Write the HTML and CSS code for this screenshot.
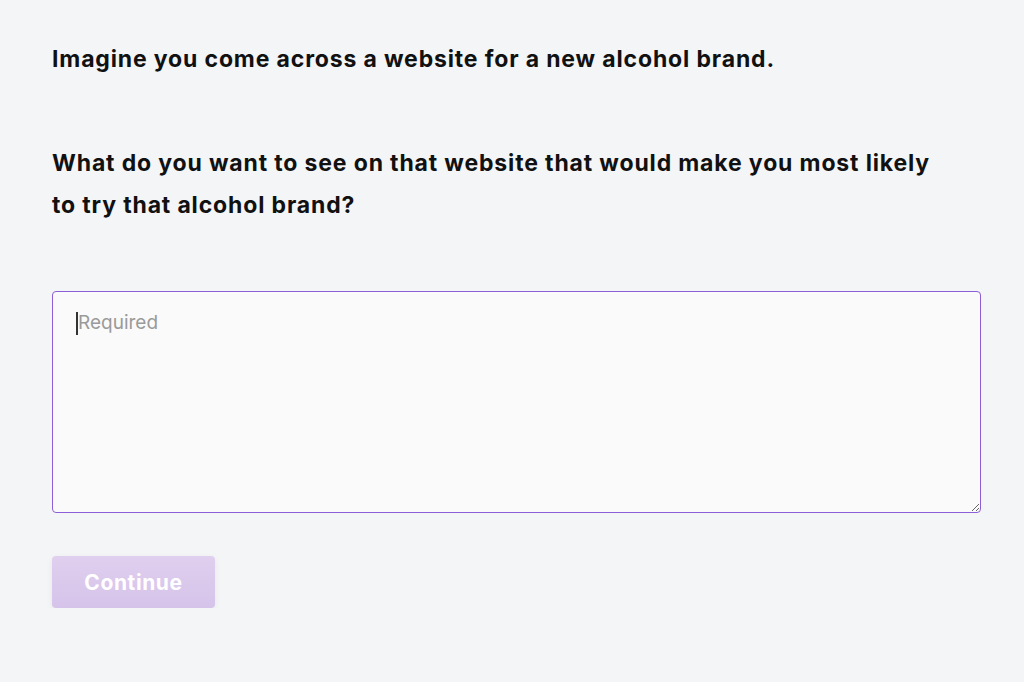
FILE: index.html
```html
<!DOCTYPE html>
<html lang="en">
<head>
<meta charset="utf-8">
<title>Question</title>
<link rel="stylesheet" href="styles.css">
</head>
<body>
<main class="page">
  <p class="question">Imagine you come across a website for a new alcohol brand.</p>
  <p class="question second">What do you want to see on that website that would make you most likely to try that alcohol brand?</p>
  <div class="field">
    <textarea class="answer" placeholder="Required"></textarea>
    <span class="caret"></span>
  </div>
  <button class="continue" type="button" disabled>Continue</button>
</main>
</body>
</html>
```

FILE: styles.css
```css
html, body {
  margin: 0;
  padding: 0;
  background: #f4f5f7;
}
body {
  font-family: "Inter", "Noto Sans", sans-serif;
  color: #111;
}
.page {
  padding: 38px 43px 0 52px;
  display: flex;
  flex-direction: column;
  align-items: flex-start;
}
.question {
  margin: 0;
  font-size: 23px;
  font-weight: 700;
  letter-spacing: 0.85px;
  line-height: 42px;
  max-width: 895px;
}
.second {
  margin-top: 62px;
}
.field {
  position: relative;
  margin-top: 65px;
  display: flex;
}
.answer {
  box-sizing: border-box;
  width: 929px;
  height: 222px;
  border: 1px solid #8c5fd8;
  border-radius: 4px;
  background: #fafafa;
  padding: 19px 24px 19px 25px;
  font-family: "Inter", "Noto Sans", sans-serif;
  font-size: 19px;
  color: #222;
  outline: none;
  resize: vertical;
}
.answer::placeholder {
  color: #9a9a9a;
}
.caret {
  position: absolute;
  left: 24px;
  top: 21px;
  width: 2px;
  height: 23px;
  background: #333;
}
.continue {
  margin-top: 43px;
  width: 163px;
  height: 52px;
  border: none;
  border-radius: 4px;
  background: linear-gradient(#e1cfef, #d5c3ea);
  color: #fff;
  font-family: "Inter", "Noto Sans", sans-serif;
  font-size: 21px;
  font-weight: 700;
  letter-spacing: 0.6px;
  box-shadow: 0 2px 6px rgba(0, 0, 0, 0.06);
}
```
